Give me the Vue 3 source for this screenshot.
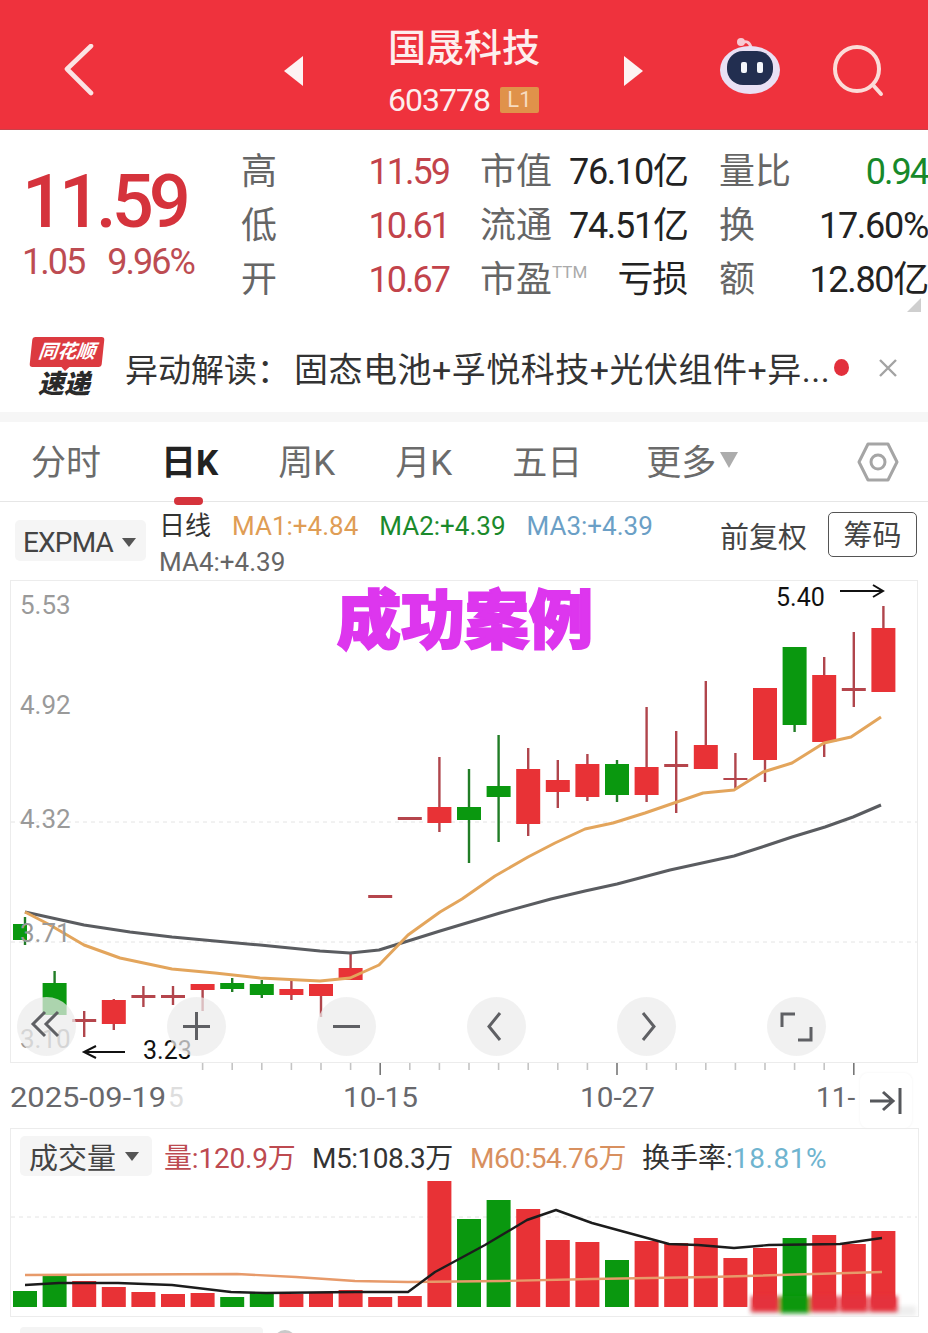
<template>
  <div class="page">
    <header class="topbar">
      <svg class="back" width="30" height="52" viewBox="0 0 30 52">
        <path d="M27 2 L3 25 L27 49" fill="none" stroke="#fbe3e3" stroke-width="4.6" stroke-linecap="round" stroke-linejoin="round" />
      </svg>
      <span class="arrow left"></span>
      <div class="title">
        <div class="name">国晟科技</div>
        <div class="code">603778<span class="lvl">L1</span></div>
      </div>
      <span class="arrow right"></span>
      <svg class="robot" width="64" height="60" viewBox="0 0 64 60">
        <path d="M24 7 Q30 3 33 11" fill="none" stroke="#f7c9d3" stroke-width="3" />
        <circle cx="23" cy="6" r="4" fill="#f7c9d3" />
        <ellipse cx="32" cy="34" rx="30" ry="24" fill="#e9e0f4" />
        <rect x="9" y="15" width="46" height="34" rx="16" fill="#222e50" />
        <rect x="23" y="26" width="6" height="11" rx="2" fill="#f4f6fb" />
        <rect x="39" y="26" width="6" height="11" rx="2" fill="#f4f6fb" />
      </svg>
      <svg class="search" width="54" height="54" viewBox="0 0 54 54">
        <circle cx="25" cy="24" r="22" fill="none" stroke="#fbdcd8" stroke-width="4" />
        <path d="M41 40 L49 49" stroke="#fbdcd8" stroke-width="4" stroke-linecap="round" />
      </svg>
    </header>

    <section class="quote">
      <div class="price">
        <div class="last">11.59</div>
        <div class="change"><span>1.05</span><span>9.96%</span></div>
      </div>
      <div class="stats">
        <template v-for="row in stats" :key="row[0]">
          <span class="lab">{{ row[0] }}</span>
          <span class="val red">{{ row[1] }}</span>
          <span class="lab mid" :class="{ ttm: row[2] === '市盈' }">{{ row[2] }}</span>
          <span class="val">{{ row[3] }}</span>
          <span class="lab side">{{ row[4] }}</span>
          <span class="val" :class="{ green: row[4] === '量比' }">{{ row[5] }}</span>
        </template>
      </div>
      <span class="corner"></span>
    </section>

    <section class="news">
      <div class="logo">
        <div class="logo-top">同花顺</div>
        <div class="logo-bottom">速递</div>
      </div>
      <div class="news-text">
        <span class="news-head">异动解读：</span>固态电池+孚悦科技+光伏组件+异...
      </div>
      <span class="dot"></span>
      <svg class="close" width="20" height="20" viewBox="0 0 20 20">
        <path d="M2 2 L18 18 M18 2 L2 18" stroke="#a3a3a3" stroke-width="2.4" />
      </svg>
    </section>

    <nav class="tabs">
      <span v-for="t in tabs" :key="t" class="tab" :class="{ active: t === '日K' }">{{ t }}</span>
      <span class="tab more">更多<i class="tri"></i></span>
      <svg class="hex" width="44" height="42" viewBox="0 0 44 42">
        <path d="M12 3 H32 L41 21 L32 39 H12 L3 21 Z" fill="none" stroke="#a5a5a5" stroke-width="3" stroke-linejoin="round" />
        <circle cx="22" cy="21" r="7" fill="none" stroke="#a5a5a5" stroke-width="3" />
      </svg>
    </nav>

    <section class="indicators">
      <div class="pill">EXPMA<i class="tri dark"></i></div>
      <div class="ma-list">
        <span class="ma-day">日线</span>
        <span class="ma1">MA1:+4.84</span>
        <span class="ma2">MA2:+4.39</span>
        <span class="ma3">MA3:+4.39</span>
        <span class="ma4">MA4:+4.39</span>
      </div>
      <span class="adjust">前复权</span>
      <span class="chips">筹码</span>
    </section>

    <section class="chart">
      <svg width="928" height="548" viewBox="0 580 928 548" class="plot">
        <rect x="10.5" y="580.5" width="907" height="482" fill="#fff" stroke="#ececec" />
        <path v-for="y in [822, 942]" :key="y" :d="`M11 ${y} H917`" stroke="#e4e4e4" stroke-dasharray="4 4" />

        <g v-for="(c, i) in candles" :key="i">
          <path :d="`M${cx(i)} ${c.wt} V${c.wb}`" :stroke="c.up ? '#b0454c' : '#217d26'" stroke-width="2.4" />
          <rect :x="c.x ?? cx(i) - 12" :y="c.t" :width="c.w ?? 24" :height="c.b - c.t" :fill="c.up ? (c.b - c.t < 6 ? '#b5454c' : '#e83236') : '#0a980f'" />
        </g>

        <polyline :points="darkLine" fill="none" stroke="#5a5c60" stroke-width="3" stroke-linejoin="round" />
        <polyline :points="orangeLine" fill="none" stroke="#e3a55c" stroke-width="3" stroke-linejoin="round" />

        <text x="20" y="614" class="axis">5.53</text>
        <text x="20" y="714" class="axis">4.92</text>
        <text x="20" y="828" class="axis">4.32</text>
        <text x="20" y="942" class="axis">3.71</text>
        <text x="20" y="1048" class="axis">3.10</text>

        <text x="776" y="606" class="note">5.40</text>
        <path d="M840 591 H882 M873 585 L883 591 L873 597" fill="none" stroke="#111" stroke-width="2" />
        <text x="143" y="1059" class="note">3.23</text>
        <path d="M125 1052 H85 M96 1046 L84 1052 L96 1058" fill="none" stroke="#111" stroke-width="2" />

        <path v-for="t in ticks" :key="t.x" :d="`M${t.x} 1063 V${t.major ? 1075 : 1070}`" :stroke="t.major ? '#777' : '#c4c4c4'" stroke-width="1.6" />
        <text x="10" y="1107" class="date" textLength="156" lengthAdjust="spacingAndGlyphs">2025-09-19</text>
        <text x="168" y="1107" class="date faded">5</text>
        <text x="343" y="1107" class="date" textLength="75" lengthAdjust="spacingAndGlyphs">10-15</text>
        <text x="580" y="1107" class="date" textLength="75" lengthAdjust="spacingAndGlyphs">10-27</text>
        <text x="816" y="1107" class="date">11-</text>
      </svg>

      <div class="headline">成功案例</div>

      <div class="controls">
        <span class="ctl" v-for="(d, i) in controlIcons" :key="i">
          <svg width="59" height="59" viewBox="0 0 59 59">
            <path :d="d" fill="none" stroke="#5f6064" stroke-width="3" />
          </svg>
        </span>
      </div>

      <div class="jump">
        <svg width="36" height="30" viewBox="0 0 36 30">
          <path d="M2 15 H25 M15 6 L25 15 L15 24 M32 2 V28" fill="none" stroke="#56585c" stroke-width="3" />
        </svg>
      </div>
    </section>

    <section class="volume">
      <div class="vol-legend">
        <div class="pill vol-pill">成交量<i class="tri dark"></i></div>
        <span class="v-red">量:120.9万</span>
        <span class="v-m5">M5:108.3万</span>
        <span class="v-m60">M60:54.76万</span>
        <span class="v-rate">换手率:<b>18.81%</b></span>
      </div>
      <svg width="928" height="139" viewBox="0 1177 928 139" class="vol-plot">
        <path d="M11 1217 H917" stroke="#e4e4e4" stroke-dasharray="4 4" />
        <rect v-for="(b, i) in bars" :key="i" :x="cx(i) - 12" :y="b.t" width="24" :height="1307 - b.t" :fill="b.up ? '#e83236' : '#0a980f'" />
        <rect x="750" y="1306" width="166" height="10" fill="#eeeeee" filter="url(#smudge)" />
        <g filter="url(#smudge)">
          <rect v-for="i in [25, 27, 28, 29]" :key="i" :x="cx(i) - 14" y="1296" width="28" height="16" fill="#e4333c" />
          <rect :x="cx(26) - 15" y="1296" width="30" height="17" fill="#0a980f" />
        </g>
        <polyline :points="m60Line" fill="none" stroke="#e79a6a" stroke-width="2.4" />
        <polyline :points="m5Line" fill="none" stroke="#1c1c1c" stroke-width="2.4" stroke-linejoin="round" />
        <defs>
          <filter id="smudge" x="-10%" y="-40%" width="120%" height="180%">
            <feGaussianBlur stdDeviation="2" />
          </filter>
        </defs>
      </svg>
    </section>

    <div class="next-panel">
      <span class="next-pill"></span>
      <span class="next-dot"></span>
    </div>
  </div>
</template>

<script setup>
const stats = [
  ['高', '11.59', '市值', '76.10亿', '量比', '0.94'],
  ['低', '10.61', '流通', '74.51亿', '换', '17.60%'],
  ['开', '10.67', '市盈', '亏损', '额', '12.80亿'],
]

const tabs = ['分时', '日K', '周K', '月K', '五日']

const cx = (i) => Math.round((25 + 29.6 * i) * 10) / 10

// body top, body bottom, wick top, wick bottom, all in page pixels
const candle = (t, b, wt, wb, up = true, extra = {}) => ({ t, b, wt, wb, up, ...extra })

const candles = [
  candle(924, 940, 917, 945, false, { x: 13, w: 14 }),
  candle(983, 1015, 971, 1015, false),
  candle(1019, 1022, 1011, 1037),
  candle(1000, 1024, 999, 1030),
  candle(995, 998, 986, 1007),
  candle(995, 998, 986, 1005),
  candle(984, 990, 984, 1011),
  candle(983, 989, 978, 992, false),
  candle(984, 995, 980, 998, false),
  candle(989, 995, 981, 1000),
  candle(984, 996, 984, 1017),
  candle(968, 980, 954, 980),
  candle(895, 898, 895, 898),
  candle(817, 820, 817, 820),
  candle(807, 823, 757, 832),
  candle(807, 820, 769, 863, false),
  candle(786, 797, 735, 842, false),
  candle(769, 824, 748, 836),
  candle(780, 792, 760, 808),
  candle(764, 797, 754, 801),
  candle(764, 795, 760, 802, false),
  candle(767, 795, 707, 802),
  candle(764, 767, 731, 813),
  candle(745, 769, 681, 769),
  candle(778, 780, 753, 790),
  candle(688, 760, 688, 782),
  candle(647, 725, 647, 732, false),
  candle(675, 742, 657, 757),
  candle(688, 691, 632, 707),
  candle(628, 692, 606, 692),
]

const orangeLine = '25,912 50,925 84,945 120,958 172,969 215,973 260,978 320,981 350,978 379,965 408,935 440,912 462,899 495,876 528,857 555,843 585,829 613,823 645,813 674,803 703,793 734,790 763,772 792,763 824,743 851,737 881,717'
const darkLine = '25,912 84,925 130,932 172,937 215,941 260,945 320,951 350,953 379,950 408,941 440,931 470,922 500,913 551,899 585,891 617,884 670,870 734,856 765,846 792,837 825,827 853,817 881,805'

const ticks = Array.from({ length: 23 }, (_, n) => {
  const i = n + 6
  return { x: cx(i), major: i === 12 || i === 20 || i === 28 }
})

const controlIcons = [
  'M28 15 L16 27 L28 39 M41 15 L29 27 L41 39',
  'M29.5 15 V43 M16 29.5 H43',
  'M16 29.5 H43',
  'M33 16 L22 29.5 L33 43',
  'M26 16 L37 29.5 L26 43',
  'M15 30 V17 H28 M44 30 V43 H31',
]

const barData = [
  [1291, 0], [1275, 0], [1281, 1], [1287, 1], [1292, 1], [1294, 1], [1293, 1], [1297, 0], [1293, 0], [1294, 1],
  [1293, 1], [1290, 1], [1297, 1], [1296, 1], [1181, 1], [1219, 0], [1200, 0], [1209, 1], [1240, 1], [1242, 1],
  [1260, 0], [1241, 1], [1243, 1], [1238, 1], [1258, 1], [1248, 1], [1238, 0], [1235, 1], [1244, 1], [1231, 1],
]
const bars = barData.map(([t, up]) => ({ t, up: up === 1 }))

const m5Line = '25,1285 59,1283 118,1283 172,1285 231,1292 266,1293 355,1292 408,1292 435,1272 485,1245 527,1220 556,1210 592,1223 669,1244 698,1245 734,1248 769,1245 840,1244 882,1238'
const m60Line = '25,1275 237,1274 296,1277 355,1281 408,1282 503,1281 592,1279 710,1277 882,1272'
</script>

<style scoped>
.page {
  position: relative;
  width: 928px;
  height: 1333px;
  overflow: hidden;
  background: #fff;
  font-family: Roboto, "Noto Sans CJK SC", sans-serif;
  color: #222;
}

.topbar {
  display: flex;
  align-items: center;
  height: 130px;
  background: #ef323d;
  box-shadow: inset 0 -1px 0 #c9414a;
  color: #fdeeee;
}
.back { margin-left: 64px; margin-right: 1px; margin-top: 10px; }
.arrow {
  width: 0;
  height: 0;
  margin-top: 12px;
  border-top: 15px solid transparent;
  border-bottom: 15px solid transparent;
}
.arrow.left { margin-left: 189px; border-right: 19px solid #fdf3f3; }
.arrow.right { margin-left: 84px; border-left: 19px solid #fdf3f3; }
.title { width: 152px; margin-left: 85px; }
.name {
  font-size: 38px;
  line-height: 40px;
  margin-top: 12px;
  font-weight: 500;
  white-space: nowrap;
}
.code {
  display: flex;
  align-items: center;
  margin-top: 17px;
  height: 30px;
  font-size: 32px;
  letter-spacing: -1px;
}
.lvl {
  width: 39px;
  height: 26px;
  margin-left: 10px;
  background: #e0924a;
  color: #f7dcc0;
  border-radius: 2px;
  font-size: 22px;
  line-height: 26px;
  letter-spacing: 0;
  text-align: center;
}
.robot { margin-left: 75px; margin-top: 2px; }
.search { margin-left: 50px; margin-top: 14px; }

.quote {
  position: relative;
  display: flex;
  height: 205px;
}
.price { width: 241px; padding: 39px 0 0 22px; box-sizing: border-box; }
.last {
  font-size: 74px;
  line-height: 66px;
  font-weight: 500;
  letter-spacing: -5px;
  color: #d5333c;
}
.change {
  display: flex;
  gap: 23px;
  margin-top: 7px;
  font-size: 36px;
  line-height: 40px;
  letter-spacing: -2px;
  color: #bd4c52;
  white-space: nowrap;
}
.stats {
  display: grid;
  grid-template-columns: 48px 160px 120px 118px 103px 138px;
  grid-auto-rows: 54px;
  align-items: center;
  margin-top: 15px;
  align-self: flex-start;
  white-space: nowrap;
}
.lab { font-size: 36px; line-height: 40px; color: #666; }
.lab.mid { padding-left: 31px; }
.lab.side { padding-left: 32px; }
.lab.ttm::after {
  content: "TTM";
  position: relative;
  top: -14px;
  font-size: 17px;
  line-height: 0;
  color: #aaa;
}
.val {
  text-align: right;
  font-size: 36px;
  line-height: 40px;
  letter-spacing: -1.3px;
  color: #222;
}
.val.red { color: #c2434b; letter-spacing: -2px; }
.val.green { color: #17892a; letter-spacing: -2px; }
.corner {
  position: absolute;
  right: 7px;
  top: 168px;
  width: 14px;
  height: 14px;
  background: #cfcfcf;
  clip-path: polygon(100% 0, 100% 100%, 0 100%);
}

.news {
  display: flex;
  align-items: center;
  height: 65px;
  padding-bottom: 12px;
  border-bottom: 10px solid #f6f6f6;
}
.logo { width: 72px; margin-left: 31px; }
.logo-top {
  position: relative;
  height: 30px;
  background: #dc3a40;
  transform: skewX(-6deg);
  border-radius: 3px;
  color: #fff;
  font-size: 19px;
  line-height: 30px;
  font-weight: 700;
  font-style: italic;
  text-align: center;
  white-space: nowrap;
}
.logo-top::after {
  content: "";
  position: absolute;
  left: 32px;
  top: 30px;
  border-top: 4px solid #dc3a40;
  border-left: 4px solid transparent;
  border-right: 4px solid transparent;
}
.logo-bottom {
  margin-top: 3px;
  padding-right: 6px;
  font-size: 26px;
  line-height: 28px;
  font-weight: 900;
  font-style: italic;
  text-align: center;
  color: #2a2a2a;
}
.news-text {
  width: 707px;
  margin-left: 22px;
  font-size: 34px;
  letter-spacing: 0.5px;
  color: #333;
  white-space: nowrap;
  overflow: hidden;
}
.news-head { font-size: 33px; margin-right: 4px; letter-spacing: 0; }
.dot {
  width: 15px;
  height: 17px;
  margin-left: 2px;
  border-radius: 50%;
  background: #e2303c;
}
.close { margin-left: 29px; }

.tabs {
  display: flex;
  align-items: center;
  gap: 60px;
  height: 75px;
  padding: 0 0 4px 31px;
  border-bottom: 1px solid #e6e6e6;
  font-size: 35px;
  color: #6b6b6b;
  white-space: nowrap;
}
.tab { position: relative; }
.tab.active { color: #222; font-weight: 700; }
.tab.active::after {
  content: "";
  position: absolute;
  left: 13px;
  bottom: -20px;
  width: 29px;
  height: 8px;
  border-radius: 4px;
  background: #d5333c;
}
.tab.more { display: flex; align-items: center; margin-left: 4px; }
.tri {
  width: 0;
  height: 0;
  margin-left: 4px;
  border-top: 16px solid #acacac;
  border-left: 9px solid transparent;
  border-right: 9px solid transparent;
}
.tri.dark {
  margin-left: 9px;
  border-top: 9px solid #555;
  border-left: 7px solid transparent;
  border-right: 7px solid transparent;
}
.hex { position: absolute; left: 856px; top: 441px; }

.indicators {
  position: relative;
  display: flex;
  height: 78px;
  padding-left: 15px;
}
.pill {
  display: flex;
  align-items: center;
  background: #f5f5f5;
  border-radius: 5px;
  white-space: nowrap;
}
.indicators .pill {
  width: 131px;
  height: 41px;
  margin-top: 18px;
  padding: 3px 0 0 8px;
  box-sizing: border-box;
  font-size: 28px;
  color: #444;
  letter-spacing: -0.8px;
}
.ma-list {
  display: flex;
  flex-wrap: wrap;
  align-items: center;
  column-gap: 21px;
  width: 522px;
  margin: 6px 0 0 13px;
  font-size: 26px;
  line-height: 35px;
  white-space: nowrap;
}
.ma-day { color: #333; }
.ma1 { color: #df9d55; }
.ma2 { color: #1b8a2c; }
.ma3 { color: #6b9fc6; }
.ma4 { color: #666; }
.adjust {
  margin: 16px 0 0 39px;
  font-size: 29px;
  line-height: 40px;
  color: #444;
  white-space: nowrap;
}
.chips {
  width: 89px;
  height: 45px;
  margin: 10px 0 0 21px;
  box-sizing: border-box;
  border: 1px solid #555;
  border-radius: 5px;
  font-size: 29px;
  line-height: 47px;
  text-align: center;
  color: #444;
}

.chart { position: relative; height: 548px; }
.plot { display: block; }
.axis {
  font-size: 26px;
  fill: #9a9a9a;
}
.note {
  font-size: 25px;
  fill: #111;
}
.date {
  font-size: 28px;
  fill: #68686c;
}
.date.faded { fill: #dedede; }
.headline {
  position: absolute;
  left: 337px;
  top: 5px;
  font-size: 64px;
  line-height: 74px;
  font-weight: 900;
  color: #dd36ee;
  -webkit-text-stroke: 2px #dd36ee;
  white-space: nowrap;
}
.controls {
  position: absolute;
  left: 17px;
  top: 417px;
  display: flex;
  gap: 91px;
}
.ctl {
  display: block;
  width: 59px;
  height: 59px;
  border-radius: 50%;
  background: rgba(236, 236, 236, 0.72);
}
.ctl svg { display: block; }
.jump {
  position: absolute;
  left: 860px;
  top: 493px;
  display: flex;
  align-items: center;
  justify-content: center;
  width: 52px;
  height: 55px;
  border-radius: 8px;
  background: #fff;
  box-shadow: 0 0 3px rgba(0, 0, 0, 0.05);
}

.volume {
  position: relative;
  height: 187px;
  width: 907px;
  margin-left: 10px;
  border: 1px solid #ececec;
  box-sizing: content-box;
}
.vol-legend {
  display: flex;
  align-items: center;
  height: 40px;
  margin: 7px 0 0 9px;
  font-size: 28px;
  letter-spacing: -0.5px;
  white-space: nowrap;
}
.vol-pill {
  width: 132px;
  height: 40px;
  padding-left: 9px;
  box-sizing: border-box;
  font-size: 29px;
  letter-spacing: 0;
  color: #444;
}
.v-red { margin-left: 12px; color: #bd4a50; width: 148px; letter-spacing: -0.2px; }
.v-m5 { color: #333; width: 158px; }
.v-m60 { color: #d8905f; width: 172px; }
.v-rate { color: #333; letter-spacing: 0; }
.v-rate b { font-weight: 400; color: #6fb4cf; letter-spacing: 0.6px; }
.vol-plot { display: block; margin: 1px 0 0 -11px; }

.next-panel { position: relative; height: 16px; }
.next-pill {
  position: absolute;
  left: 20px;
  top: 10px;
  width: 243px;
  height: 20px;
  border-radius: 4px;
  background: #f4f4f4;
}
.next-dot {
  position: absolute;
  left: 274px;
  top: 13px;
  width: 22px;
  height: 22px;
  border-radius: 50%;
  background: #c9c9c9;
}
</style>

<style>
html, body { background: #fff; }
</style>
